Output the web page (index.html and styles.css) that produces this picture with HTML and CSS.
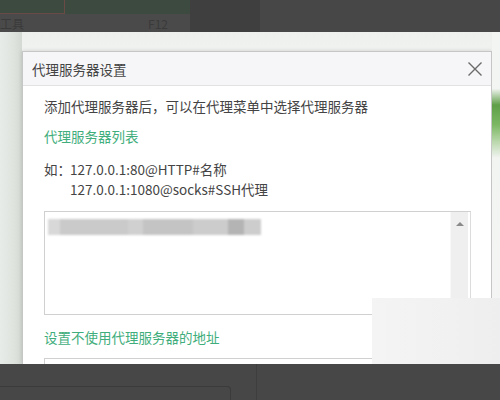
FILE: index.html
```html
<!DOCTYPE html>
<html lang="zh-CN">
<head>
    <meta charset="UTF-8">
    <title>代理服务器设置</title>
    <link rel="stylesheet" href="styles.css">
</head>
<body>
    <div class="screen">
        <!-- Browser menu behind the dialog -->
        <div class="topbar">
            <div class="menu-panel">
                <div class="menu-head"><span class="menu-box"></span></div>
                <div class="menu-row">
                    <span>工具</span>
                    <span class="shortcut">F12</span>
                </div>
            </div>
            <div class="menu-gap"></div>
            <div class="menu-rest"></div>
        </div>

        <div class="stage">
            <div class="side side-left"></div>

            <div class="dialog">
                <div class="dialog-title">
                    <span>代理服务器设置</span>
                    <button class="close" aria-label="关闭">
                        <svg width="16" height="16" viewBox="0 0 16 16">
                            <path d="M1.5 1.5 L14.5 14.5 M14.5 1.5 L1.5 14.5" stroke="#6b6b6b" stroke-width="1.4" fill="none"/>
                        </svg>
                    </button>
                </div>

                <div class="dialog-body">
                    <p class="hint">添加代理服务器后，可以在代理菜单中选择代理服务器</p>
                    <p class="section">代理服务器列表</p>
                    <p class="example"><span class="label">如：</span>127.0.0.1:80@HTTP#名称</p>
                    <p class="example indent">127.0.0.1:1080@socks#SSH代理</p>

                    <div class="field">
                        <div class="field-text"><span class="blur-line"></span></div>
                        <div class="scrollbar"><span class="arrow-up"></span></div>
                    </div>

                    <p class="section section-2">设置不使用代理服务器的地址</p>
                    <div class="field field-2"></div>
                </div>
            </div>

            <div class="side side-right"></div>
            <div class="watermark"></div>
        </div>

        <div class="bottombar">
            <div class="bottom-panel"><span class="bottom-box"></span></div>
            <div class="bottom-rest"></div>
        </div>
    </div>
</body>
</html>
```

FILE: styles.css
```css
/* Page */
body {
    margin: 0;
    font-family: "Noto Sans CJK SC", "Microsoft YaHei", sans-serif;
    color: #444;
}

.screen {
    width: 500px;
    height: 400px;
    overflow: hidden;
    display: flex;
    flex-direction: column;
}

/* Top menu strip */
.topbar {
    height: 32px;
    flex-shrink: 0;
    display: flex;
    background-color: #474747;
}

.menu-panel {
    width: 190px;
    background-color: #4a4a4a;
}

.menu-head {
    height: 14px;
    background-color: #3c4a3f;
}

.menu-box {
    display: block;
    width: 64px;
    height: 13px;
    border: 1px solid #6a4a44;
    border-left: none;
    border-top: none;
}

.menu-row {
    height: 18px;
    display: flex;
    justify-content: space-between;
    align-items: center;
    padding: 0 22px 0 0;
    font-size: 12px;
    color: #3a3a3a;
}

.menu-gap {
    width: 70px;
    background-color: #3f3f3f;
}

.menu-rest {
    flex: 1;
    background-color: #474747;
}

/* Middle area with the dialog */
.stage {
    height: 332px;
    flex-shrink: 0;
    display: flex;
    padding-top: 19px;
    box-sizing: border-box;
    position: relative;
    overflow: hidden;
    background: linear-gradient(180deg, #eef0ee 0%, #f6f7f6 20%, #f3f4f3 100%);
}

.side {
    flex-shrink: 0;
}

.side-left {
    width: 22px;
    margin-top: -19px;
    background: linear-gradient(90deg, #e8ece8 0%, #dfe4df 60%, #d4d9d4 100%);
}

.side-right {
    width: 8px;
    margin-top: -19px;
    background: linear-gradient(180deg, #f3f5f3 0%, #f3f5f3 17%, #5f9f48 22%, #7cb864 28%, #b9d8ab 33%, #f2f4f2 38%, #f4f5f4 100%);
}

.dialog {
    width: 470px;
    flex-shrink: 0;
    box-sizing: border-box;
    border: 1px solid #c6c6c6;
    border-bottom: none;
    background-color: #fff;
    box-shadow: 0 0 4px rgba(0, 0, 0, 0.15);
}

.dialog-title {
    height: 33px;
    display: flex;
    justify-content: space-between;
    align-items: center;
    padding: 0 7px 0 9px;
    background-color: #f6f6f8;
    border-bottom: 1px solid #e2e2e2;
    font-size: 13.5px;
    color: #444;
}

.close {
    border: none;
    background: none;
    padding: 0;
    width: 18px;
    height: 18px;
    display: flex;
    align-items: center;
    justify-content: center;
    cursor: pointer;
}

.dialog-body {
    padding: 10px 0 0 21px;
}

.dialog-body p {
    margin: 0;
    font-size: 13.5px;
    line-height: 20px;
}

.hint {
    color: #444;
}

.section {
    color: #3fae7c;
    margin-top: 10px !important;
}

.example {
    color: #444;
}

.example .label {
    display: inline-block;
    width: 26px;
}

.hint + .section + .example {
    margin-top: 13px;
}

.indent {
    padding-left: 26px;
}

/* Text boxes */
.field {
    width: 427px;
    height: 104px;
    margin-top: 12px;
    box-sizing: border-box;
    border: 1px solid #d0d0d0;
    border-right-color: #dcdcdc;
    display: flex;
}

.field-text {
    flex: 1;
    padding: 7px 0 0 3px;
}

.blur-line {
    display: block;
    width: 213px;
    height: 16px;
    filter: blur(0.8px);
    background: linear-gradient(90deg,
        #d8d8d8 0px, #d8d8d8 12px,
        #cacaca 12px, #cacaca 80px,
        #d0d0d0 80px, #d0d0d0 95px,
        #c4c4c4 95px, #c4c4c4 145px,
        #cccccc 145px, #cccccc 180px,
        #b4b4b4 180px, #b4b4b4 196px,
        #cdcdcd 196px, #cdcdcd 213px);
}

.scrollbar {
    width: 18px;
    margin: 0 2px 0 0;
    background-color: #efefef;
    border-left: 1px solid #f8f8f8;
    display: flex;
    justify-content: center;
    padding-top: 10px;
    box-sizing: border-box;
}

.arrow-up {
    width: 0;
    height: 0;
    border-left: 4px solid transparent;
    border-right: 4px solid transparent;
    border-bottom: 4px solid #8a8a8a;
}

.section-2 {
    margin-top: 12px !important;
}

.field-2 {
    margin-top: 11px;
    height: 40px;
}

/* Light patch covering the bottom right corner */
.watermark {
    position: absolute;
    left: 372px;
    top: 266px;
    width: 128px;
    height: 66px;
    background: linear-gradient(90deg, #f4f4f4 0%, #f1f1f1 60%, #eeeeee 100%);
}

/* Bottom strip */
.bottombar {
    height: 36px;
    flex-shrink: 0;
    display: flex;
    background-color: #474747;
}

.bottom-panel {
    width: 257px;
    border-right: 1px solid #3e3e3e;
    padding-top: 22px;
    box-sizing: border-box;
}

.bottom-box {
    display: block;
    width: 230px;
    height: 20px;
    border-top: 1px solid #3b3b3b;
    border-right: 1px solid #3b3b3b;
    border-radius: 0 4px 0 0;
}

.bottom-rest {
    flex: 1;
}
```
